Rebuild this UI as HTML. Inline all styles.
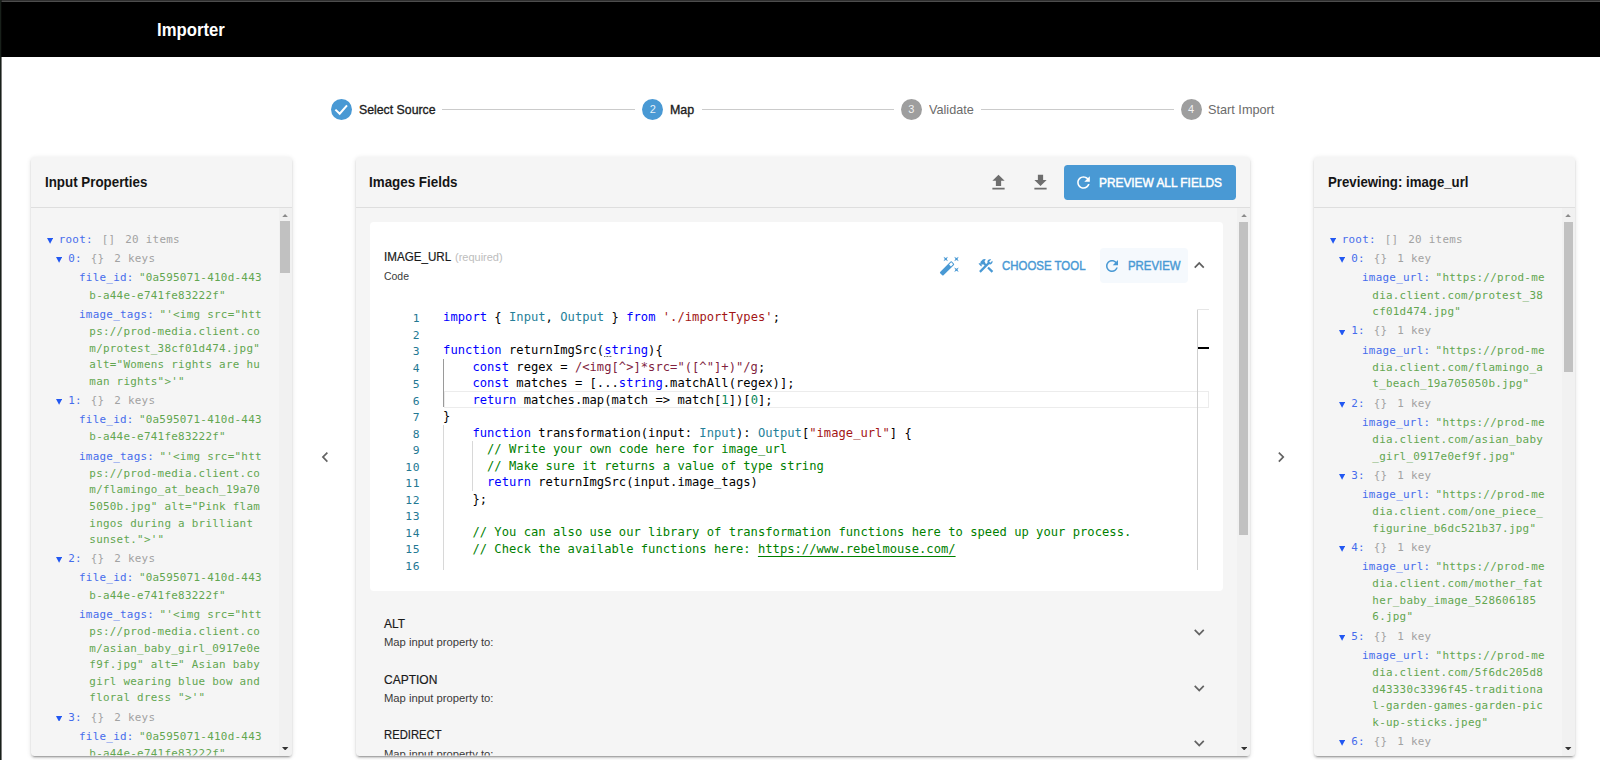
<!DOCTYPE html>
<html lang="en"><head><meta charset="utf-8"><title>Importer</title>
<style>
*{box-sizing:border-box;margin:0;padding:0}
html,body{width:1600px;height:760px;overflow:hidden;background:#fff}
body{position:relative;font-family:"Liberation Sans",sans-serif}
.a{position:absolute;display:block}
.t{position:absolute;white-space:nowrap;line-height:20px;height:20px}
.dmono{font-family:"DejaVu Sans Mono","Liberation Mono",monospace;white-space:pre}
.lmono{font-family:"Liberation Mono",monospace;white-space:pre}
.hint{background:linear-gradient(90deg,#6a6a6a 0 1.8px,transparent 1.8px) -0.6px 100%/3px 1.5px repeat-x}
</style></head>
<body>
<header class="app-bar">
<div class="a" style="left:0.00px;top:0.00px;width:1600.00px;height:56.60px;background:#000;"></div>
<div class="a" style="left:0.00px;top:0.00px;width:1600.00px;height:1.00px;background:#2f2f2f;"></div>
<div class="a" style="left:0.00px;top:1.00px;width:1600.00px;height:1.00px;background:#4d4d4d;"></div>
<div class="a" style="left:0.00px;top:0.00px;width:1.00px;height:760.00px;background:#18201a;"></div>
<div class="a" style="left:1.00px;top:0.00px;width:1.00px;height:760.00px;background:rgba(12,14,12,.55);"></div>
<div class="t" style="left:156.80px;top:20.00px;font-size:18.60px;color:#fff;font-weight:700;transform:scaleX(0.8987);transform-origin:0 0;">Importer</div>
</header>
<nav class="stepper">
<div class="a" style="left:330.70px;top:98.90px;width:21px;height:21px;border-radius:50%;background:#4999d4"></div>
<svg class="a" style="left:330.7px;top:98.9px" width="21" height="21" viewBox="0 0 21 21"><path d="M4.4 10.6 L8.7 14.7 L16.0 6.4" fill="none" stroke="#fff" stroke-width="2"/></svg>
<div class="t" style="left:358.70px;top:100.00px;font-size:12.90px;color:#1c1c1c;-webkit-text-stroke:0.35px #1c1c1c;transform:scaleX(0.9538);transform-origin:0 0;">Select Source</div>
<div class="a" style="left:442.30px;top:108.90px;width:193.00px;height:1.40px;background:#cbcbcb;"></div>
<div class="a" style="left:642.30px;top:98.90px;width:21px;height:21px;border-radius:50%;background:#4999d4"></div>
<div class="t" style="left:649.70px;top:99.00px;font-size:11.00px;color:rgba(255,255,255,.88);">2</div>
<div class="t" style="left:670.10px;top:100.00px;font-size:12.90px;color:#1c1c1c;-webkit-text-stroke:0.35px #1c1c1c;transform:scaleX(0.9643);transform-origin:0 0;">Map</div>
<div class="a" style="left:701.90px;top:108.90px;width:192.30px;height:1.40px;background:#cbcbcb;"></div>
<div class="a" style="left:900.90px;top:98.90px;width:21px;height:21px;border-radius:50%;background:#9e9e9e"></div>
<div class="t" style="left:908.30px;top:99.00px;font-size:11.00px;color:rgba(255,255,255,.88);">3</div>
<div class="t" style="left:928.90px;top:100.00px;font-size:12.90px;color:#6b6b6b;transform:scaleX(0.9811);transform-origin:0 0;">Validate</div>
<div class="a" style="left:981.40px;top:108.90px;width:192.50px;height:1.40px;background:#cbcbcb;"></div>
<div class="a" style="left:1180.60px;top:98.90px;width:21px;height:21px;border-radius:50%;background:#9e9e9e"></div>
<div class="t" style="left:1188.00px;top:99.00px;font-size:11.00px;color:rgba(255,255,255,.88);">4</div>
<div class="t" style="left:1207.80px;top:100.00px;font-size:12.90px;color:#6b6b6b;transform:scaleX(0.9854);transform-origin:0 0;">Start Import</div>
</nav>
<aside class="panel input-properties">
<div class="a" style="left:31.00px;top:157.00px;width:261.30px;height:598.70px;background:#f5f5f5;box-shadow:0 3px 1px -2px rgba(0,0,0,.2),0 2px 2px 0 rgba(0,0,0,.14),0 1px 5px 0 rgba(0,0,0,.12);border-radius:3.7px;"></div>
<div class="a" style="left:31.00px;top:207.00px;width:261.30px;height:1.00px;background:#dedede;"></div>
<div class="t" style="left:44.90px;top:172.00px;font-size:14.60px;color:#151515;font-weight:700;transform:scaleX(0.9147);transform-origin:0 0;">Input Properties</div>
<div class="a" style="left:278.60px;top:208.00px;width:13.70px;height:547.70px;background:#f1f1f1;border-bottom-right-radius:3.7px;"></div>
<div class="a" style="left:280.40px;top:221.40px;width:10.00px;height:51.20px;background:#c1c1c1;"></div>
<svg class="a" style="left:282.25px;top:213.8px" width="6.2" height="3.3" viewBox="0 0 6.2 3.3"><path d="M0 3.3 L3.1 0 L6.2 3.3Z" fill="#8b8b8b"/></svg>
<svg class="a" style="left:282.15px;top:746.9px" width="6.4" height="3.5" viewBox="0 0 6.4 3.5"><path d="M0 0 L6.4 0 L3.2 3.5Z" fill="#333"/></svg>
<svg class="a" style="left:47.00px;top:238.30px" width="6.2" height="5.8" viewBox="0 0 6.2 5.8"><path d="M0 0 L6.2 0 L3.1 5.8Z" fill="#2258f2"/></svg>
<div class="t dmono" style="left:58.70px;top:230.00px;font-size:10.90px;color:#456cec;letter-spacing:0.2729px;">root:</div>
<div class="t dmono" style="left:101.78px;top:230.00px;font-size:10.90px;color:#a2a2a2;letter-spacing:0.2729px;">[]</div>
<div class="t dmono" style="left:125.28px;top:230.00px;font-size:10.90px;color:#a2a2a2;letter-spacing:0.2729px;">20 items</div>
<svg class="a" style="left:56.30px;top:257.45px" width="6.2" height="5.8" viewBox="0 0 6.2 5.8"><path d="M0 0 L6.2 0 L3.1 5.8Z" fill="#2258f2"/></svg>
<div class="t dmono" style="left:68.20px;top:249.00px;font-size:10.90px;color:#456cec;letter-spacing:0.2729px;">0:</div>
<div class="t dmono" style="left:90.77px;top:249.00px;font-size:10.90px;color:#a2a2a2;letter-spacing:0.2729px;">{}</div>
<div class="t dmono" style="left:114.28px;top:249.00px;font-size:10.90px;color:#a2a2a2;letter-spacing:0.2729px;">2 keys</div>
<div class="t dmono" style="left:79.00px;top:268.00px;font-size:10.90px;color:#456cec;letter-spacing:0.2729px;">file_id:</div>
<div class="t dmono" style="left:138.88px;top:268.00px;font-size:10.90px;color:#62a650;letter-spacing:0.2729px;">&quot;0a595071-410d-443</div>
<div class="t dmono" style="left:89.30px;top:286.00px;font-size:10.90px;color:#62a650;letter-spacing:0.2729px;">b-a44e-e741fe83222f&quot;</div>
<div class="t dmono" style="left:79.00px;top:305.00px;font-size:10.90px;color:#456cec;letter-spacing:0.2729px;">image_tags:</div>
<div class="t dmono" style="left:159.38px;top:305.00px;font-size:10.90px;color:#62a650;letter-spacing:0.2729px;">&quot;&#x27;&lt;img src=&quot;htt</div>
<div class="t dmono" style="left:89.30px;top:322.00px;font-size:10.90px;color:#62a650;letter-spacing:0.2729px;">ps://prod-media.client.co</div>
<div class="t dmono" style="left:89.30px;top:339.00px;font-size:10.90px;color:#62a650;letter-spacing:0.2729px;">m/protest_38cf01d474.jpg&quot;</div>
<div class="t dmono" style="left:89.30px;top:355.00px;font-size:10.90px;color:#62a650;letter-spacing:0.2729px;">alt=&quot;Womens rights are hu</div>
<div class="t dmono" style="left:89.30px;top:372.00px;font-size:10.90px;color:#62a650;letter-spacing:0.2729px;">man rights&quot;&gt;&#x27;&quot;</div>
<svg class="a" style="left:56.30px;top:399.15px" width="6.2" height="5.8" viewBox="0 0 6.2 5.8"><path d="M0 0 L6.2 0 L3.1 5.8Z" fill="#2258f2"/></svg>
<div class="t dmono" style="left:68.20px;top:391.00px;font-size:10.90px;color:#456cec;letter-spacing:0.2729px;">1:</div>
<div class="t dmono" style="left:90.77px;top:391.00px;font-size:10.90px;color:#a2a2a2;letter-spacing:0.2729px;">{}</div>
<div class="t dmono" style="left:114.28px;top:391.00px;font-size:10.90px;color:#a2a2a2;letter-spacing:0.2729px;">2 keys</div>
<div class="t dmono" style="left:79.00px;top:410.00px;font-size:10.90px;color:#456cec;letter-spacing:0.2729px;">file_id:</div>
<div class="t dmono" style="left:138.88px;top:410.00px;font-size:10.90px;color:#62a650;letter-spacing:0.2729px;">&quot;0a595071-410d-443</div>
<div class="t dmono" style="left:89.30px;top:427.00px;font-size:10.90px;color:#62a650;letter-spacing:0.2729px;">b-a44e-e741fe83222f&quot;</div>
<div class="t dmono" style="left:79.00px;top:447.00px;font-size:10.90px;color:#456cec;letter-spacing:0.2729px;">image_tags:</div>
<div class="t dmono" style="left:159.38px;top:447.00px;font-size:10.90px;color:#62a650;letter-spacing:0.2729px;">&quot;&#x27;&lt;img src=&quot;htt</div>
<div class="t dmono" style="left:89.30px;top:464.00px;font-size:10.90px;color:#62a650;letter-spacing:0.2729px;">ps://prod-media.client.co</div>
<div class="t dmono" style="left:89.30px;top:480.00px;font-size:10.90px;color:#62a650;letter-spacing:0.2729px;">m/flamingo_at_beach_19a70</div>
<div class="t dmono" style="left:89.30px;top:497.00px;font-size:10.90px;color:#62a650;letter-spacing:0.2729px;">5050b.jpg&quot; alt=&quot;Pink flam</div>
<div class="t dmono" style="left:89.30px;top:514.00px;font-size:10.90px;color:#62a650;letter-spacing:0.2729px;">ingos during a brilliant</div>
<div class="t dmono" style="left:89.30px;top:530.00px;font-size:10.90px;color:#62a650;letter-spacing:0.2729px;">sunset.&quot;&gt;&#x27;&quot;</div>
<svg class="a" style="left:56.30px;top:557.40px" width="6.2" height="5.8" viewBox="0 0 6.2 5.8"><path d="M0 0 L6.2 0 L3.1 5.8Z" fill="#2258f2"/></svg>
<div class="t dmono" style="left:68.20px;top:549.00px;font-size:10.90px;color:#456cec;letter-spacing:0.2729px;">2:</div>
<div class="t dmono" style="left:90.77px;top:549.00px;font-size:10.90px;color:#a2a2a2;letter-spacing:0.2729px;">{}</div>
<div class="t dmono" style="left:114.28px;top:549.00px;font-size:10.90px;color:#a2a2a2;letter-spacing:0.2729px;">2 keys</div>
<div class="t dmono" style="left:79.00px;top:568.00px;font-size:10.90px;color:#456cec;letter-spacing:0.2729px;">file_id:</div>
<div class="t dmono" style="left:138.88px;top:568.00px;font-size:10.90px;color:#62a650;letter-spacing:0.2729px;">&quot;0a595071-410d-443</div>
<div class="t dmono" style="left:89.30px;top:586.00px;font-size:10.90px;color:#62a650;letter-spacing:0.2729px;">b-a44e-e741fe83222f&quot;</div>
<div class="t dmono" style="left:79.00px;top:605.00px;font-size:10.90px;color:#456cec;letter-spacing:0.2729px;">image_tags:</div>
<div class="t dmono" style="left:159.38px;top:605.00px;font-size:10.90px;color:#62a650;letter-spacing:0.2729px;">&quot;&#x27;&lt;img src=&quot;htt</div>
<div class="t dmono" style="left:89.30px;top:622.00px;font-size:10.90px;color:#62a650;letter-spacing:0.2729px;">ps://prod-media.client.co</div>
<div class="t dmono" style="left:89.30px;top:639.00px;font-size:10.90px;color:#62a650;letter-spacing:0.2729px;">m/asian_baby_girl_0917e0e</div>
<div class="t dmono" style="left:89.30px;top:655.00px;font-size:10.90px;color:#62a650;letter-spacing:0.2729px;">f9f.jpg&quot; alt=&quot; Asian baby</div>
<div class="t dmono" style="left:89.30px;top:672.00px;font-size:10.90px;color:#62a650;letter-spacing:0.2729px;">girl wearing blue bow and</div>
<div class="t dmono" style="left:89.30px;top:688.00px;font-size:10.90px;color:#62a650;letter-spacing:0.2729px;">floral dress &quot;&gt;&#x27;&quot;</div>
<svg class="a" style="left:56.30px;top:715.65px" width="6.2" height="5.8" viewBox="0 0 6.2 5.8"><path d="M0 0 L6.2 0 L3.1 5.8Z" fill="#2258f2"/></svg>
<div class="t dmono" style="left:68.20px;top:708.00px;font-size:10.90px;color:#456cec;letter-spacing:0.2729px;">3:</div>
<div class="t dmono" style="left:90.77px;top:708.00px;font-size:10.90px;color:#a2a2a2;letter-spacing:0.2729px;">{}</div>
<div class="t dmono" style="left:114.28px;top:708.00px;font-size:10.90px;color:#a2a2a2;letter-spacing:0.2729px;">2 keys</div>
<div class="t dmono" style="left:79.00px;top:727.00px;font-size:10.90px;color:#456cec;letter-spacing:0.2729px;">file_id:</div>
<div class="t dmono" style="left:138.88px;top:727.00px;font-size:10.90px;color:#62a650;letter-spacing:0.2729px;">&quot;0a595071-410d-443</div>
<div class="t dmono" style="left:89.30px;top:744.00px;font-size:10.90px;color:#62a650;letter-spacing:0.2729px;clip-path:inset(0 0 8.60px 0);">b-a44e-e741fe83222f&quot;</div>
</aside>
<div class="panel-toggles">
<svg class="a" style="left:314.50px;top:446.65px" width="20.20" height="20.20" viewBox="0 0 24 24"><path d="M15.41 7.41 14 6l-6 6 6 6 1.41-1.41L10.83 12z" fill="#636363"/></svg>
<svg class="a" style="left:1270.90px;top:446.65px" width="20.20" height="20.20" viewBox="0 0 24 24"><path d="M10 6 8.59 7.41 13.17 12l-4.58 4.59L10 18l6-6z" fill="#636363"/></svg>
</div>
<main class="panel images-fields">
<div class="a" style="left:356.00px;top:157.00px;width:894.30px;height:598.70px;background:#f5f5f5;box-shadow:0 3px 1px -2px rgba(0,0,0,.2),0 2px 2px 0 rgba(0,0,0,.14),0 1px 5px 0 rgba(0,0,0,.12);border-radius:3.7px;"></div>
<div class="a" style="left:356.00px;top:207.00px;width:894.30px;height:1.00px;background:#dedede;"></div>
<div class="t" style="left:369.40px;top:172.00px;font-size:14.60px;color:#151515;font-weight:700;transform:scaleX(0.9175);transform-origin:0 0;">Images Fields</div>
<div class="a" style="left:1237.30px;top:208.00px;width:13.00px;height:547.70px;background:#f1f1f1;border-bottom-right-radius:3.7px;"></div>
<div class="a" style="left:1239.10px;top:221.80px;width:9.30px;height:313.00px;background:#c1c1c1;"></div>
<svg class="a" style="left:1240.60px;top:213.8px" width="6.2" height="3.3" viewBox="0 0 6.2 3.3"><path d="M0 3.3 L3.1 0 L6.2 3.3Z" fill="#8b8b8b"/></svg>
<svg class="a" style="left:1240.50px;top:746.9px" width="6.4" height="3.5" viewBox="0 0 6.4 3.5"><path d="M0 0 L6.4 0 L3.2 3.5Z" fill="#333"/></svg>
<svg class="a" style="left:987.80px;top:172.10px" width="21.00" height="21.00" viewBox="0 0 24 24"><path d="M9 16h6v-6h4l-7-7-7 7h4zm-4 2h14v2H5z" fill="#6e6e6e"/></svg>
<svg class="a" style="left:1029.50px;top:172.10px" width="21.00" height="21.00" viewBox="0 0 24 24"><path d="M19 9h-4V3H9v6H5l7 7 7-7zM5 18v2h14v-2H5z" fill="#6e6e6e"/></svg>
<div class="a" style="left:1064.40px;top:165.00px;width:171.90px;height:34.70px;background:#4999d4;border-radius:3.7px;"></div>
<svg class="a" style="left:1074.10px;top:172.90px" width="19.00" height="19.00" viewBox="0 0 24 24"><path d="M17.65 6.35C16.2 4.9 14.21 4 12 4c-4.42 0-7.99 3.58-7.99 8s3.57 8 7.99 8c3.73 0 6.84-2.55 7.73-6h-2.08c-.82 2.33-3.04 4-5.65 4-3.31 0-6-2.69-6-6s2.69-6 6-6c1.66 0 3.14.69 4.22 1.78L13 11h7V4l-2.35 2.35z" fill="#fff"/></svg>
<div class="t" style="left:1099.40px;top:173.00px;font-size:12.90px;color:#fff;-webkit-text-stroke:0.50px #fff;transform:scaleX(0.9207);transform-origin:0 0;">PREVIEW ALL FIELDS</div>
<div class="a" style="left:370.00px;top:222.00px;width:853.40px;height:368.50px;background:#fff;border-radius:3.7px;"></div>
<div class="t" style="left:383.70px;top:247.00px;font-size:12.90px;color:#1a1a1a;-webkit-text-stroke:0.2px #1a1a1a;transform:scaleX(0.9013);transform-origin:0 0;">IMAGE_URL</div>
<div class="t" style="left:455.20px;top:247.00px;font-size:11.00px;color:#bdbdbd;transform:scaleX(0.9982);transform-origin:0 0;">(required)</div>
<div class="t" style="left:383.80px;top:266.00px;font-size:11.00px;color:#3a3a3a;transform:scaleX(0.9507);transform-origin:0 0;">Code</div>
<svg class="a" style="left:939.10px;top:255.10px" width="21.50" height="21.50" viewBox="0 0 24 24"><path d="M7.5 5.6 10 7 8.6 4.5 10 2 7.5 3.4 5 2l1.4 2.5L5 7zm12 9.8L17 14l1.4 2.5L17 19l2.5-1.4L22 19l-1.4-2.5L22 14zM22 2l-2.5 1.4L17 2l1.4 2.5L17 7l2.5-1.4L22 7l-1.4-2.5zm-7.63 5.29a.9959.9959 0 0 0-1.41 0L1.29 18.96c-.39.39-.39 1.02 0 1.41l2.34 2.34c.39.39 1.02.39 1.41 0L16.7 11.05c.39-.39.39-1.02 0-1.41l-2.33-2.35zm-1.03 5.49-2.12-2.12 2.44-2.44 2.12 2.12-2.44 2.44z" fill="#4999d4"/></svg>
<svg class="a" style="left:977.10px;top:256.60px" width="17.80" height="17.80" viewBox="0 0 24 24"><path d="m13.7826 15.1719 2.1213-2.1213 5.9963 5.9962-2.1213 2.1213zM17.5 10c1.93 0 3.5-1.57 3.5-3.5 0-.58-.16-1.12-.41-1.6l-2.7 2.7-1.49-1.49 2.7-2.7c-.48-.25-1.02-.41-1.6-.41C15.57 3 14 4.57 14 6.5c0 .41.08.8.21 1.16l-1.85 1.85-1.78-1.78.71-.71-1.41-1.41L12 3.49c-1.17-1.17-3.07-1.17-4.24 0L4.22 7.03l1.41 1.41H2.81l-.71.71 3.54 3.54.71-.71V9.15l1.41 1.41.71-.71 1.78 1.78-7.41 7.41 2.12 2.12L16.34 9.79c.36.13.75.21 1.16.21z" fill="#4999d4"/></svg>
<div class="t" style="left:1001.80px;top:256.00px;font-size:12.90px;color:#4999d4;-webkit-text-stroke:0.45px #4999d4;transform:scaleX(0.8879);transform-origin:0 0;">CHOOSE TOOL</div>
<div class="a" style="left:1100.10px;top:248.40px;width:88.30px;height:34.60px;background:#f5f9fd;border-radius:3.7px;"></div>
<svg class="a" style="left:1103.20px;top:256.80px" width="18.00" height="18.00" viewBox="0 0 24 24"><path d="M17.65 6.35C16.2 4.9 14.21 4 12 4c-4.42 0-7.99 3.58-7.99 8s3.57 8 7.99 8c3.73 0 6.84-2.55 7.73-6h-2.08c-.82 2.33-3.04 4-5.65 4-3.31 0-6-2.69-6-6s2.69-6 6-6c1.66 0 3.14.69 4.22 1.78L13 11h7V4l-2.35 2.35z" fill="#4999d4"/></svg>
<div class="t" style="left:1127.90px;top:256.00px;font-size:12.90px;color:#4999d4;-webkit-text-stroke:0.45px #4999d4;transform:scaleX(0.8841);transform-origin:0 0;">PREVIEW</div>
<svg class="a" style="left:1188.65px;top:255.40px" width="20.50" height="20.50" viewBox="0 0 24 24"><path d="m12 8-6 6 1.41 1.41L12 10.83l4.59 4.58L18 14z" fill="#5f5f5f"/></svg>
<div class="a" style="left:443.60px;top:391.40px;width:765.30px;height:16.40px;background:transparent;border:1.7px solid #ececec;"></div>
<div class="a" style="left:443.20px;top:359.30px;width:1.00px;height:48.00px;background:#9a9a9a;"></div>
<div class="a" style="left:443.20px;top:424.50px;width:1.00px;height:145.20px;background:#d8d8d8;"></div>
<div class="a" style="left:472.30px;top:441.00px;width:1.00px;height:49.60px;background:#d8d8d8;"></div>
<div class="a" style="left:1197.20px;top:309.20px;width:1.00px;height:260.50px;background:#cfcfcf;"></div>
<div class="a" style="left:1197.20px;top:309.20px;width:12.00px;height:1.00px;background:#e6e6e6;"></div>
<div class="a" style="left:1197.60px;top:347.40px;width:11.60px;height:1.30px;background:#000;"></div>
<div class="t dmono" style="left:412.68px;top:309.00px;font-size:11.30px;color:#237893;letter-spacing:0.5268px;">1</div>
<div class="t dmono" style="left:443.10px;top:307.00px;font-size:12.14px;color:#000;letter-spacing:0.0212px;"><span style="color:#0000ff">import</span> { <span style="color:#267f99">Input</span>, <span style="color:#267f99">Output</span> } <span style="color:#0000ff">from</span> <span style="color:#a31515">&#x27;./importTypes&#x27;</span>;</div>
<div class="t dmono" style="left:412.68px;top:326.00px;font-size:11.30px;color:#237893;letter-spacing:0.5268px;">2</div>
<div class="t dmono" style="left:412.68px;top:342.00px;font-size:11.30px;color:#237893;letter-spacing:0.5268px;">3</div>
<div class="t dmono" style="left:443.10px;top:340.00px;font-size:12.14px;color:#000;letter-spacing:0.0212px;"><span style="color:#0000ff">function</span> returnImgSrc(<span class="hint" style="color:#0000ff">s</span><span style="color:#0000ff">tring</span>){</div>
<div class="t dmono" style="left:412.68px;top:359.00px;font-size:11.30px;color:#237893;letter-spacing:0.5268px;">4</div>
<div class="t dmono" style="left:443.10px;top:357.00px;font-size:12.14px;color:#000;letter-spacing:0.0212px;">    <span style="color:#0000ff">const</span> regex = <span style="color:#811f3f">/&lt;img[^&gt;]*src=&quot;([^&quot;]+)&quot;/g</span>;</div>
<div class="t dmono" style="left:412.68px;top:375.00px;font-size:11.30px;color:#237893;letter-spacing:0.5268px;">5</div>
<div class="t dmono" style="left:443.10px;top:373.00px;font-size:12.14px;color:#000;letter-spacing:0.0212px;">    <span style="color:#0000ff">const</span> matches = [...<span style="color:#0000ff">string</span>.matchAll(regex)];</div>
<div class="t dmono" style="left:412.68px;top:392.00px;font-size:11.30px;color:#237893;letter-spacing:0.5268px;">6</div>
<div class="t dmono" style="left:443.10px;top:390.00px;font-size:12.14px;color:#000;letter-spacing:0.0212px;">    <span style="color:#0000ff">return</span> matches.map(match =&gt; match[<span style="color:#098658">1</span>])[<span style="color:#098658">0</span>];</div>
<div class="t dmono" style="left:412.68px;top:408.00px;font-size:11.30px;color:#237893;letter-spacing:0.5268px;">7</div>
<div class="t dmono" style="left:443.10px;top:406.00px;font-size:12.14px;color:#000;letter-spacing:0.0212px;">}</div>
<div class="t dmono" style="left:412.68px;top:425.00px;font-size:11.30px;color:#237893;letter-spacing:0.5268px;">8</div>
<div class="t dmono" style="left:443.10px;top:423.00px;font-size:12.14px;color:#000;letter-spacing:0.0212px;">    <span style="color:#0000ff">function</span> transformation(input: <span style="color:#267f99">Input</span>): <span style="color:#267f99">Output</span>[<span style="color:#a31515">&quot;image_url&quot;</span>] {</div>
<div class="t dmono" style="left:412.68px;top:441.00px;font-size:11.30px;color:#237893;letter-spacing:0.5268px;">9</div>
<div class="t dmono" style="left:443.10px;top:439.00px;font-size:12.14px;color:#000;letter-spacing:0.0212px;">      <span style="color:#008000">// Write your own code here for image_url</span></div>
<div class="t dmono" style="left:405.36px;top:458.00px;font-size:11.30px;color:#237893;letter-spacing:0.5268px;">10</div>
<div class="t dmono" style="left:443.10px;top:456.00px;font-size:12.14px;color:#000;letter-spacing:0.0212px;">      <span style="color:#008000">// Make sure it returns a value of type string</span></div>
<div class="t dmono" style="left:405.36px;top:474.00px;font-size:11.30px;color:#237893;letter-spacing:0.5268px;">11</div>
<div class="t dmono" style="left:443.10px;top:472.00px;font-size:12.14px;color:#000;letter-spacing:0.0212px;">      <span style="color:#0000ff">return</span> returnImgSrc(input.image_tags)</div>
<div class="t dmono" style="left:405.36px;top:491.00px;font-size:11.30px;color:#237893;letter-spacing:0.5268px;">12</div>
<div class="t dmono" style="left:443.10px;top:489.00px;font-size:12.14px;color:#000;letter-spacing:0.0212px;">    };</div>
<div class="t dmono" style="left:405.36px;top:507.00px;font-size:11.30px;color:#237893;letter-spacing:0.5268px;">13</div>
<div class="t dmono" style="left:405.36px;top:524.00px;font-size:11.30px;color:#237893;letter-spacing:0.5268px;">14</div>
<div class="t dmono" style="left:443.10px;top:522.00px;font-size:12.14px;color:#000;letter-spacing:0.0212px;">    <span style="color:#008000">// You can also use our library of transformation functions here to speed up your process.</span></div>
<div class="t dmono" style="left:405.36px;top:540.00px;font-size:11.30px;color:#237893;letter-spacing:0.5268px;">15</div>
<div class="t dmono" style="left:443.10px;top:539.00px;font-size:12.14px;color:#000;letter-spacing:0.0212px;">    <span style="color:#008000">// Check the available functions here: </span><span style="color:#008000;text-decoration:underline;text-underline-offset:2.5px">https://www.rebelmouse.com/</span></div>
<div class="t dmono" style="left:405.36px;top:557.00px;font-size:11.30px;color:#237893;letter-spacing:0.5268px;">16</div>
<div class="t" style="left:384.10px;top:614.00px;font-size:12.90px;color:#1a1a1a;-webkit-text-stroke:0.2px #1a1a1a;transform:scaleX(0.9250);transform-origin:0 0;">ALT</div>
<div class="t" style="left:383.70px;top:632.00px;font-size:11.00px;color:#3a3a3a;transform:scaleX(1.0224);transform-origin:0 0;">Map input property to:</div>
<svg class="a" style="left:1188.65px;top:622.15px" width="20.50" height="20.50" viewBox="0 0 24 24"><path d="M16.59 8.59 12 13.17 7.41 8.59 6 10l6 6 6-6z" fill="#636363"/></svg>
<div class="t" style="left:383.60px;top:670.00px;font-size:12.90px;color:#1a1a1a;-webkit-text-stroke:0.2px #1a1a1a;transform:scaleX(0.9313);transform-origin:0 0;">CAPTION</div>
<div class="t" style="left:383.70px;top:688.00px;font-size:11.00px;color:#3a3a3a;transform:scaleX(1.0224);transform-origin:0 0;">Map input property to:</div>
<svg class="a" style="left:1188.65px;top:677.65px" width="20.50" height="20.50" viewBox="0 0 24 24"><path d="M16.59 8.59 12 13.17 7.41 8.59 6 10l6 6 6-6z" fill="#636363"/></svg>
<div class="t" style="left:383.60px;top:725.00px;font-size:12.90px;color:#1a1a1a;-webkit-text-stroke:0.2px #1a1a1a;transform:scaleX(0.8735);transform-origin:0 0;">REDIRECT</div>
<div class="t" style="left:383.70px;top:744.00px;font-size:11.00px;color:#3a3a3a;transform:scaleX(1.0224);transform-origin:0 0;clip-path:inset(0 0 8.60px 0);">Map input property to:</div>
<svg class="a" style="left:1188.65px;top:733.15px" width="20.50" height="20.50" viewBox="0 0 24 24"><path d="M16.59 8.59 12 13.17 7.41 8.59 6 10l6 6 6-6z" fill="#636363"/></svg>
</main>
<aside class="panel preview">
<div class="a" style="left:1314.00px;top:157.00px;width:261.30px;height:598.70px;background:#f5f5f5;box-shadow:0 3px 1px -2px rgba(0,0,0,.2),0 2px 2px 0 rgba(0,0,0,.14),0 1px 5px 0 rgba(0,0,0,.12);border-radius:3.7px;"></div>
<div class="a" style="left:1314.00px;top:207.00px;width:261.30px;height:1.00px;background:#dedede;"></div>
<div class="t" style="left:1327.60px;top:172.00px;font-size:14.60px;color:#151515;font-weight:700;transform:scaleX(0.9072);transform-origin:0 0;">Previewing: image_url</div>
<div class="a" style="left:1561.80px;top:208.00px;width:13.50px;height:547.70px;background:#f1f1f1;border-bottom-right-radius:3.7px;"></div>
<div class="a" style="left:1563.60px;top:221.70px;width:9.80px;height:150.30px;background:#c1c1c1;"></div>
<svg class="a" style="left:1565.35px;top:213.8px" width="6.2" height="3.3" viewBox="0 0 6.2 3.3"><path d="M0 3.3 L3.1 0 L6.2 3.3Z" fill="#8b8b8b"/></svg>
<svg class="a" style="left:1565.25px;top:746.9px" width="6.4" height="3.5" viewBox="0 0 6.4 3.5"><path d="M0 0 L6.4 0 L3.2 3.5Z" fill="#333"/></svg>
<svg class="a" style="left:1330.00px;top:238.30px" width="6.2" height="5.8" viewBox="0 0 6.2 5.8"><path d="M0 0 L6.2 0 L3.1 5.8Z" fill="#2258f2"/></svg>
<div class="t dmono" style="left:1341.70px;top:230.00px;font-size:10.90px;color:#456cec;letter-spacing:0.2729px;">root:</div>
<div class="t dmono" style="left:1384.78px;top:230.00px;font-size:10.90px;color:#a2a2a2;letter-spacing:0.2729px;">[]</div>
<div class="t dmono" style="left:1408.28px;top:230.00px;font-size:10.90px;color:#a2a2a2;letter-spacing:0.2729px;">20 items</div>
<svg class="a" style="left:1339.30px;top:257.45px" width="6.2" height="5.8" viewBox="0 0 6.2 5.8"><path d="M0 0 L6.2 0 L3.1 5.8Z" fill="#2258f2"/></svg>
<div class="t dmono" style="left:1351.20px;top:249.00px;font-size:10.90px;color:#456cec;letter-spacing:0.2729px;">0:</div>
<div class="t dmono" style="left:1373.77px;top:249.00px;font-size:10.90px;color:#a2a2a2;letter-spacing:0.2729px;">{}</div>
<div class="t dmono" style="left:1397.28px;top:249.00px;font-size:10.90px;color:#a2a2a2;letter-spacing:0.2729px;">1 key</div>
<div class="t dmono" style="left:1362.00px;top:268.00px;font-size:10.90px;color:#456cec;letter-spacing:0.2729px;">image_url:</div>
<div class="t dmono" style="left:1435.55px;top:268.00px;font-size:10.90px;color:#62a650;letter-spacing:0.2729px;">&quot;https://prod-me</div>
<div class="t dmono" style="left:1372.30px;top:286.00px;font-size:10.90px;color:#62a650;letter-spacing:0.2729px;">dia.client.com/protest_38</div>
<div class="t dmono" style="left:1372.30px;top:302.00px;font-size:10.90px;color:#62a650;letter-spacing:0.2729px;">cf01d474.jpg&quot;</div>
<svg class="a" style="left:1339.30px;top:329.60px" width="6.2" height="5.8" viewBox="0 0 6.2 5.8"><path d="M0 0 L6.2 0 L3.1 5.8Z" fill="#2258f2"/></svg>
<div class="t dmono" style="left:1351.20px;top:321.00px;font-size:10.90px;color:#456cec;letter-spacing:0.2729px;">1:</div>
<div class="t dmono" style="left:1373.77px;top:321.00px;font-size:10.90px;color:#a2a2a2;letter-spacing:0.2729px;">{}</div>
<div class="t dmono" style="left:1397.28px;top:321.00px;font-size:10.90px;color:#a2a2a2;letter-spacing:0.2729px;">1 key</div>
<div class="t dmono" style="left:1362.00px;top:341.00px;font-size:10.90px;color:#456cec;letter-spacing:0.2729px;">image_url:</div>
<div class="t dmono" style="left:1435.55px;top:341.00px;font-size:10.90px;color:#62a650;letter-spacing:0.2729px;">&quot;https://prod-me</div>
<div class="t dmono" style="left:1372.30px;top:358.00px;font-size:10.90px;color:#62a650;letter-spacing:0.2729px;">dia.client.com/flamingo_a</div>
<div class="t dmono" style="left:1372.30px;top:374.00px;font-size:10.90px;color:#62a650;letter-spacing:0.2729px;">t_beach_19a705050b.jpg&quot;</div>
<svg class="a" style="left:1339.30px;top:401.75px" width="6.2" height="5.8" viewBox="0 0 6.2 5.8"><path d="M0 0 L6.2 0 L3.1 5.8Z" fill="#2258f2"/></svg>
<div class="t dmono" style="left:1351.20px;top:394.00px;font-size:10.90px;color:#456cec;letter-spacing:0.2729px;">2:</div>
<div class="t dmono" style="left:1373.77px;top:394.00px;font-size:10.90px;color:#a2a2a2;letter-spacing:0.2729px;">{}</div>
<div class="t dmono" style="left:1397.28px;top:394.00px;font-size:10.90px;color:#a2a2a2;letter-spacing:0.2729px;">1 key</div>
<div class="t dmono" style="left:1362.00px;top:413.00px;font-size:10.90px;color:#456cec;letter-spacing:0.2729px;">image_url:</div>
<div class="t dmono" style="left:1435.55px;top:413.00px;font-size:10.90px;color:#62a650;letter-spacing:0.2729px;">&quot;https://prod-me</div>
<div class="t dmono" style="left:1372.30px;top:430.00px;font-size:10.90px;color:#62a650;letter-spacing:0.2729px;">dia.client.com/asian_baby</div>
<div class="t dmono" style="left:1372.30px;top:447.00px;font-size:10.90px;color:#62a650;letter-spacing:0.2729px;">_girl_0917e0ef9f.jpg&quot;</div>
<svg class="a" style="left:1339.30px;top:473.90px" width="6.2" height="5.8" viewBox="0 0 6.2 5.8"><path d="M0 0 L6.2 0 L3.1 5.8Z" fill="#2258f2"/></svg>
<div class="t dmono" style="left:1351.20px;top:466.00px;font-size:10.90px;color:#456cec;letter-spacing:0.2729px;">3:</div>
<div class="t dmono" style="left:1373.77px;top:466.00px;font-size:10.90px;color:#a2a2a2;letter-spacing:0.2729px;">{}</div>
<div class="t dmono" style="left:1397.28px;top:466.00px;font-size:10.90px;color:#a2a2a2;letter-spacing:0.2729px;">1 key</div>
<div class="t dmono" style="left:1362.00px;top:485.00px;font-size:10.90px;color:#456cec;letter-spacing:0.2729px;">image_url:</div>
<div class="t dmono" style="left:1435.55px;top:485.00px;font-size:10.90px;color:#62a650;letter-spacing:0.2729px;">&quot;https://prod-me</div>
<div class="t dmono" style="left:1372.30px;top:502.00px;font-size:10.90px;color:#62a650;letter-spacing:0.2729px;">dia.client.com/one_piece_</div>
<div class="t dmono" style="left:1372.30px;top:519.00px;font-size:10.90px;color:#62a650;letter-spacing:0.2729px;">figurine_b6dc521b37.jpg&quot;</div>
<svg class="a" style="left:1339.30px;top:546.05px" width="6.2" height="5.8" viewBox="0 0 6.2 5.8"><path d="M0 0 L6.2 0 L3.1 5.8Z" fill="#2258f2"/></svg>
<div class="t dmono" style="left:1351.20px;top:538.00px;font-size:10.90px;color:#456cec;letter-spacing:0.2729px;">4:</div>
<div class="t dmono" style="left:1373.77px;top:538.00px;font-size:10.90px;color:#a2a2a2;letter-spacing:0.2729px;">{}</div>
<div class="t dmono" style="left:1397.28px;top:538.00px;font-size:10.90px;color:#a2a2a2;letter-spacing:0.2729px;">1 key</div>
<div class="t dmono" style="left:1362.00px;top:557.00px;font-size:10.90px;color:#456cec;letter-spacing:0.2729px;">image_url:</div>
<div class="t dmono" style="left:1435.55px;top:557.00px;font-size:10.90px;color:#62a650;letter-spacing:0.2729px;">&quot;https://prod-me</div>
<div class="t dmono" style="left:1372.30px;top:574.00px;font-size:10.90px;color:#62a650;letter-spacing:0.2729px;">dia.client.com/mother_fat</div>
<div class="t dmono" style="left:1372.30px;top:591.00px;font-size:10.90px;color:#62a650;letter-spacing:0.2729px;">her_baby_image_528606185</div>
<div class="t dmono" style="left:1372.30px;top:607.00px;font-size:10.90px;color:#62a650;letter-spacing:0.2729px;">6.jpg&quot;</div>
<svg class="a" style="left:1339.30px;top:634.75px" width="6.2" height="5.8" viewBox="0 0 6.2 5.8"><path d="M0 0 L6.2 0 L3.1 5.8Z" fill="#2258f2"/></svg>
<div class="t dmono" style="left:1351.20px;top:627.00px;font-size:10.90px;color:#456cec;letter-spacing:0.2729px;">5:</div>
<div class="t dmono" style="left:1373.77px;top:627.00px;font-size:10.90px;color:#a2a2a2;letter-spacing:0.2729px;">{}</div>
<div class="t dmono" style="left:1397.28px;top:627.00px;font-size:10.90px;color:#a2a2a2;letter-spacing:0.2729px;">1 key</div>
<div class="t dmono" style="left:1362.00px;top:646.00px;font-size:10.90px;color:#456cec;letter-spacing:0.2729px;">image_url:</div>
<div class="t dmono" style="left:1435.55px;top:646.00px;font-size:10.90px;color:#62a650;letter-spacing:0.2729px;">&quot;https://prod-me</div>
<div class="t dmono" style="left:1372.30px;top:663.00px;font-size:10.90px;color:#62a650;letter-spacing:0.2729px;">dia.client.com/5f6dc205d8</div>
<div class="t dmono" style="left:1372.30px;top:680.00px;font-size:10.90px;color:#62a650;letter-spacing:0.2729px;">d43330c3396f45-traditiona</div>
<div class="t dmono" style="left:1372.30px;top:696.00px;font-size:10.90px;color:#62a650;letter-spacing:0.2729px;">l-garden-games-garden-pic</div>
<div class="t dmono" style="left:1372.30px;top:713.00px;font-size:10.90px;color:#62a650;letter-spacing:0.2729px;">k-up-sticks.jpeg&quot;</div>
<svg class="a" style="left:1339.30px;top:740.00px" width="6.2" height="5.8" viewBox="0 0 6.2 5.8"><path d="M0 0 L6.2 0 L3.1 5.8Z" fill="#2258f2"/></svg>
<div class="t dmono" style="left:1351.20px;top:732.00px;font-size:10.90px;color:#456cec;letter-spacing:0.2729px;">6:</div>
<div class="t dmono" style="left:1373.77px;top:732.00px;font-size:10.90px;color:#a2a2a2;letter-spacing:0.2729px;">{}</div>
<div class="t dmono" style="left:1397.28px;top:732.00px;font-size:10.90px;color:#a2a2a2;letter-spacing:0.2729px;">1 key</div>
</aside>
</body></html>
